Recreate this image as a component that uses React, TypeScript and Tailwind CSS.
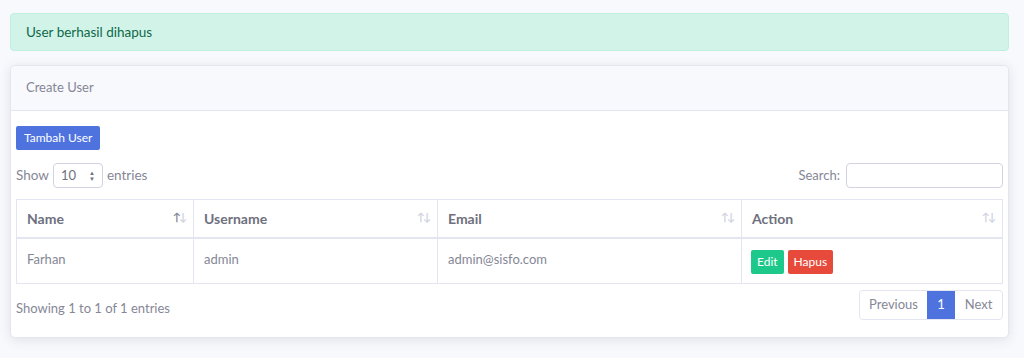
import React from "react";

const Sort = ({ active }: { active?: boolean }) => (
  <span className="flex items-center text-[11px] leading-none tracking-[-2px] pr-[2px] pb-[4px]">
    <span className={active ? "text-[#858796]" : "text-[#d1d3e2]"}>↑</span>
    <span className="text-[#d1d3e2]">↓</span>
  </span>
);

export default function App() {
  const cols = [
    { name: "Name", w: "w-[177px]", active: true },
    { name: "Username", w: "w-[244px]" },
    { name: "Email", w: "w-[304px]" },
    { name: "Action", w: "flex-1" },
  ];
  return (
    <div
      className="w-[1024px] h-[358px] bg-[#f8f9fc] pt-[13px] px-[10px] text-[#858796]"
      style={{ fontFamily: "Lato, 'Noto Sans', sans-serif" }}
    >
      <div className="h-[38px] rounded-[4px] bg-[#d2f4e8] border border-[#bff0de] text-[#0f6848] text-[13.5px] flex items-center px-[15px] w-[999px]">
        User berhasil dihapus
      </div>
      <div className="mt-[14px] w-[999px] bg-white rounded-[5px] shadow-[0_2px_12px_rgba(58,59,69,0.12)] border border-[#e3e6f0]">
        <div className="h-[45px] bg-[#f8f9fc] border-b border-[#e3e6f0] flex items-center px-[15px] text-[13px] rounded-t-[5px]">
          Create User
        </div>
        <div className="px-[5px] pt-[15px] pb-[17px]">
          <button className="block h-[24px] px-[8px] bg-[#4e73df] text-white text-[12px] leading-[24px] rounded-[2px]">
            Tambah User
          </button>
          <div className="flex justify-between items-center mt-[13px] text-[13.5px]">
            <div className="flex items-center gap-[4px]">
              <span>Show</span>
              <div className="w-[50px] h-[25px] border border-[#d1d3e2] rounded-[4px] flex items-center justify-between px-[7px] text-[#6e707e] text-[13px]">
                <span>10</span>
                <span className="flex flex-col text-[6px] leading-[6px] text-[#6e707e]">
                  <span>▲</span>
                  <span>▼</span>
                </span>
              </div>
              <span>entries</span>
            </div>
            <div className="flex items-center gap-[6px] text-[13px]">
              <span>Search:</span>
              <div className="w-[157px] h-[25px] border border-[#d1d3e2] rounded-[4px]" />
            </div>
          </div>
          <div className="mt-[11px] w-[987px] border border-[#e3e6f0]">
            <div className="flex h-[39px] border-b-2 border-[#e3e6f0]">
              {cols.map((c, i) => (
                <div
                  key={c.name}
                  className={`${c.w} flex items-center justify-between pl-[10px] pr-[6px] font-bold text-[14px] text-[#6e707e] ${i < 3 ? "border-r border-[#e3e6f0]" : ""}`}
                >
                  <span>{c.name}</span>
                  <Sort active={c.active} />
                </div>
              ))}
            </div>
            <div className="flex h-[44px] text-[13px]">
              <div className="w-[177px] flex items-center pl-[10px] pb-[2px] border-r border-[#e3e6f0]">Farhan</div>
              <div className="w-[244px] flex items-center pl-[10px] pb-[2px] border-r border-[#e3e6f0]">admin</div>
              <div className="w-[304px] flex items-center pl-[10px] pb-[2px] border-r border-[#e3e6f0]">admin@sisfo.com</div>
              <div className="flex-1 flex items-center pl-[9px] gap-[4px] pt-[2px]">
                <span className="h-[24px] px-[6px] bg-[#1cc88a] text-white text-[12px] rounded-[2px] flex items-center">Edit</span>
                <span className="h-[24px] px-[6px] bg-[#e74a3b] text-white text-[12px] rounded-[2px] flex items-center">Hapus</span>
              </div>
            </div>
          </div>
          <div className="flex justify-between items-center mt-[6px]">
            <span className="text-[13px] pt-[7px]">Showing 1 to 1 of 1 entries</span>
            <div className="flex h-[30px] text-[13px] border border-[#e3e6f0] rounded-[4px] overflow-hidden">
              <span className="w-[67px] flex items-center justify-center">Previous</span>
              <span className="w-[28px] flex items-center justify-center bg-[#4e73df] text-white">1</span>
              <span className="w-[47px] flex items-center justify-center">Next</span>
            </div>
          </div>
        </div>
      </div>
    </div>
  );
}
